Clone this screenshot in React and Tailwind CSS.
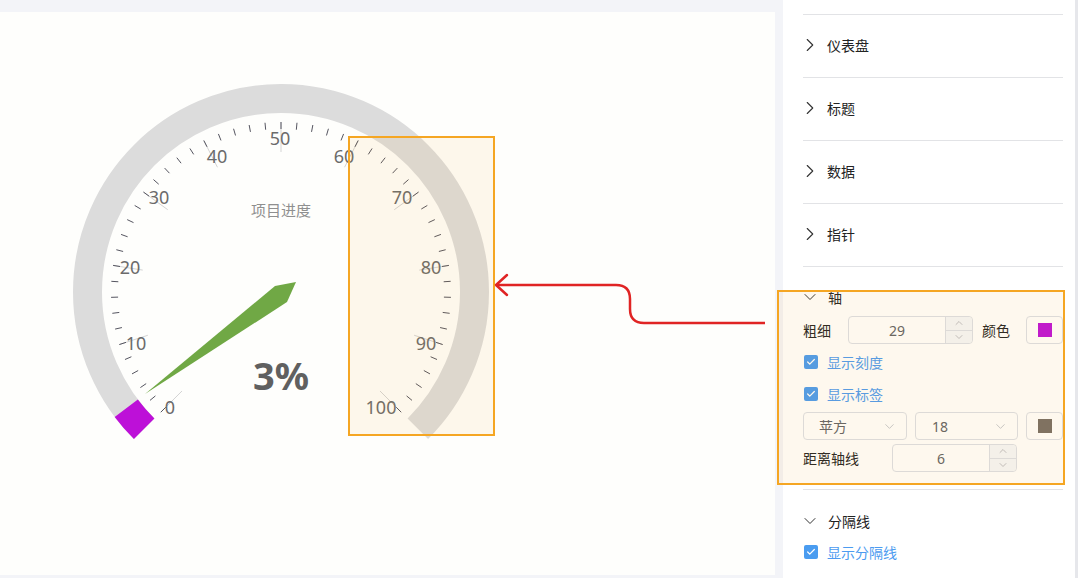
import React from 'react';
import { ChevronRight, ChevronDown, ChevronUp, Check } from 'lucide-react';

const CX = 281;
const CY = 292;
const R = 193.5;

const polar = (deg, r) => {
  const a = (deg * Math.PI) / 180;
  return [CX + r * Math.cos(a), CY - r * Math.sin(a)];
};

const labels = [
  { v: 0, x: 170, y: 407 },
  { v: 10, x: 136, y: 343 },
  { v: 20, x: 130, y: 267 },
  { v: 30, x: 159, y: 197 },
  { v: 40, x: 217, y: 156 },
  { v: 50, x: 280, y: 138 },
  { v: 60, x: 344, y: 156 },
  { v: 70, x: 402, y: 197 },
  { v: 80, x: 431, y: 267 },
  { v: 90, x: 426, y: 343 },
  { v: 100, x: 381, y: 407 },
];

const Gauge = () => {
  const [sx, sy] = polar(225, R);
  const [ex, ey] = polar(-45, R);
  const [px, py] = polar(225 - 2.7 * 3, R);

  const ticks = [];
  for (let i = 0; i <= 50; i++) {
    const deg = 225 - 5.4 * i;
    const [x1, y1] = polar(deg, 163);
    const [x2, y2] = polar(deg, 170);
    ticks.push(<line key={'t' + i} x1={x1} y1={y1} x2={x2} y2={y2} stroke="#555560" strokeWidth="1" />);
  }
  const splits = [];
  for (let i = 0; i <= 10; i++) {
    const deg = 225 - 27 * i;
    const [x1, y1] = polar(deg, 140);
    const [x2, y2] = polar(deg, 170);
    splits.push(<line key={'s' + i} x1={x1} y1={y1} x2={x2} y2={y2} stroke="#d4d4d4" strokeWidth="1" />);
  }

  return (
    <svg width="775" height="563" viewBox="0 12 775 563" className="block">
      <path d={`M${sx} ${sy} A${R} ${R} 0 1 1 ${ex} ${ey}`} fill="none" stroke="#dcdcdc" strokeWidth="29" />
      <path d={`M${sx} ${sy} A${R} ${R} 0 0 1 ${px} ${py}`} fill="none" stroke="#bd10d8" strokeWidth="29" />
      {splits}
      {ticks}
      {labels.map((l) => (
        <text key={l.v} x={l.x} y={l.y} textAnchor="middle" dominantBaseline="central" fontSize="18" fill="#6b6b6b" fontFamily="Noto Sans, sans-serif">
          {l.v}
        </text>
      ))}
      <text x="281" y="209" textAnchor="middle" dominantBaseline="central" fontSize="15" fill="#8f8f8f" fontFamily="Noto Sans CJK SC, sans-serif">
        项目进度
      </text>
      <polygon points="145,394 275,286 296,282 287,302" fill="#70a845" />
      <text x="281" y="375" textAnchor="middle" dominantBaseline="central" fontSize="38" fontWeight="700" fill="#606060" fontFamily="Noto Sans, sans-serif">
        3%
      </text>
    </svg>
  );
};

const NumberInput = ({ value, width }) => (
  <div className={`flex shrink-0 h-[28px] border border-[#dcdfe6] rounded-[4px] bg-white ${width}`}>
    <div className="flex-1 flex items-center justify-center text-[14px] text-[#606266]">{value}</div>
    <div className="w-[27px] flex flex-col border-l border-[#dcdfe6] bg-[#f5f7fa] rounded-r-[4px]">
      <div className="flex-1 flex items-center justify-center border-b border-[#dcdfe6]">
        <ChevronUp className="w-[12px] h-[12px] text-[#a8abb2]" strokeWidth={1.5} />
      </div>
      <div className="flex-1 flex items-center justify-center">
        <ChevronDown className="w-[12px] h-[12px] text-[#a8abb2]" strokeWidth={1.5} />
      </div>
    </div>
  </div>
);

const Select = ({ value, width, pl }) => (
  <div className={`flex shrink-0 items-center justify-between h-[28px] border border-[#dcdfe6] rounded-[4px] bg-white pr-[9px] ${width} ${pl}`}>
    <span className="text-[14px] text-[#606266]">{value}</span>
    <ChevronDown className="w-[15px] h-[15px] text-[#b8bcc4]" strokeWidth={1.3} />
  </div>
);

const ColorButton = ({ color }) => (
  <div className="w-[37px] shrink-0 h-[28px] border border-[#dcdfe6] rounded-[4px] bg-white flex items-center justify-center">
    <div className={`w-[14px] h-[14px] ${color}`} />
  </div>
);

const CheckRow = ({ label }) => (
  <div className="h-[32px] flex items-center">
    <div className="ml-[1px] w-[14px] h-[14px] rounded-[2px] bg-[#4a9cf0] flex items-center justify-center">
      <Check className="w-[10px] h-[10px] text-white" strokeWidth={3} />
    </div>
    <span className="ml-[9px] text-[14px] text-[#4c9bf0]">{label}</span>
  </div>
);

const Collapsed = ({ title }) => (
  <div className="h-[63px] border-t border-[#e2e3e6] flex items-center pb-[2px]">
    <ChevronRight className="w-[22px] h-[22px] ml-[-4px] text-[#333]" strokeWidth={1.2} />
    <span className="ml-[6px] text-[14px] text-[#222]">{title}</span>
  </div>
);

const Header = ({ title }) => (
  <div className="h-[22px] flex items-center">
    <ChevronDown className="w-[20px] h-[20px] ml-[-3px] text-[#333]" strokeWidth={1.2} />
    <span className="ml-[8px] text-[14px] text-[#222]">{title}</span>
  </div>
);

export default function App() {
  return (
    <div className="relative w-[1078px] h-[578px] overflow-hidden bg-[#f3f4f8] flex font-[Noto_Sans,Noto_Sans_CJK_SC,sans-serif]">
      <div className="w-[775px] shrink-0 pt-[12px]">
        <div className="h-[563px] bg-[#fefefc]">
          <Gauge />
        </div>
      </div>

      <div className="ml-[8px] w-[292px] shrink-0 h-full bg-white pl-[20px] pr-[12px] pt-[14px]">
        <Collapsed title="仪表盘" />
        <Collapsed title="标题" />
        <Collapsed title="数据" />
        <Collapsed title="指针" />

        <div className="border-t border-[#e2e3e6] pt-[19px] pb-[17px]">
          <Header title="轴" />
          <div className="mt-[8px] h-[28px] flex items-center whitespace-nowrap">
            <span className="w-[45px] shrink-0 text-[14px] text-[#222]">粗细</span>
            <NumberInput value="29" width="w-[125px]" />
            <span className="ml-[9px] w-[28px] shrink-0 text-[14px] text-[#222]">颜色</span>
            <div className="ml-[16px] shrink-0">
              <ColorButton color="bg-[#bd10d8]" />
            </div>
          </div>
          <div className="mt-[2px]">
            <CheckRow label="显示刻度" />
            <CheckRow label="显示标签" />
          </div>
          <div className="mt-[2px] flex gap-[8px]">
            <Select value="苹方" width="w-[104px]" pl="pl-[15px]" />
            <Select value="18" width="w-[103px]" pl="pl-[16px]" />
            <ColorButton color="bg-[#776e66]" />
          </div>
          <div className="mt-[4px] h-[28px] flex items-center whitespace-nowrap">
            <span className="w-[89px] shrink-0 text-[14px] text-[#222]">距离轴线</span>
            <NumberInput value="6" width="w-[125px]" />
          </div>
        </div>

        <div className="border-t border-[#e2e3e6] pt-[20px]">
          <Header title="分隔线" />
          <div className="mt-[4px]">
            <CheckRow label="显示分隔线" />
          </div>
        </div>
      </div>
      <div className="w-[3px] shrink-0 bg-[#e6e7eb]" />

      <div className="absolute left-[348px] top-[136px] w-[147px] h-[300px] border-2 border-[#f5a623] bg-[#f5a623]/[0.08]" />
      <div className="absolute left-[777px] top-[290px] w-[288px] h-[195px] border-2 border-[#f5a623] bg-[#f5a623]/[0.08]" />

      <svg className="absolute inset-0 pointer-events-none" width="1078" height="578">
        <path d="M765 323 H644 Q630 323 630 309 V299 Q630 285 616 285 H497" fill="none" stroke="#e02424" strokeWidth="2.5" />
        <path d="M507 275 L496 285 L507 295" fill="none" stroke="#e02424" strokeWidth="2.5" strokeLinecap="round" strokeLinejoin="round" />
      </svg>
    </div>
  );
}
